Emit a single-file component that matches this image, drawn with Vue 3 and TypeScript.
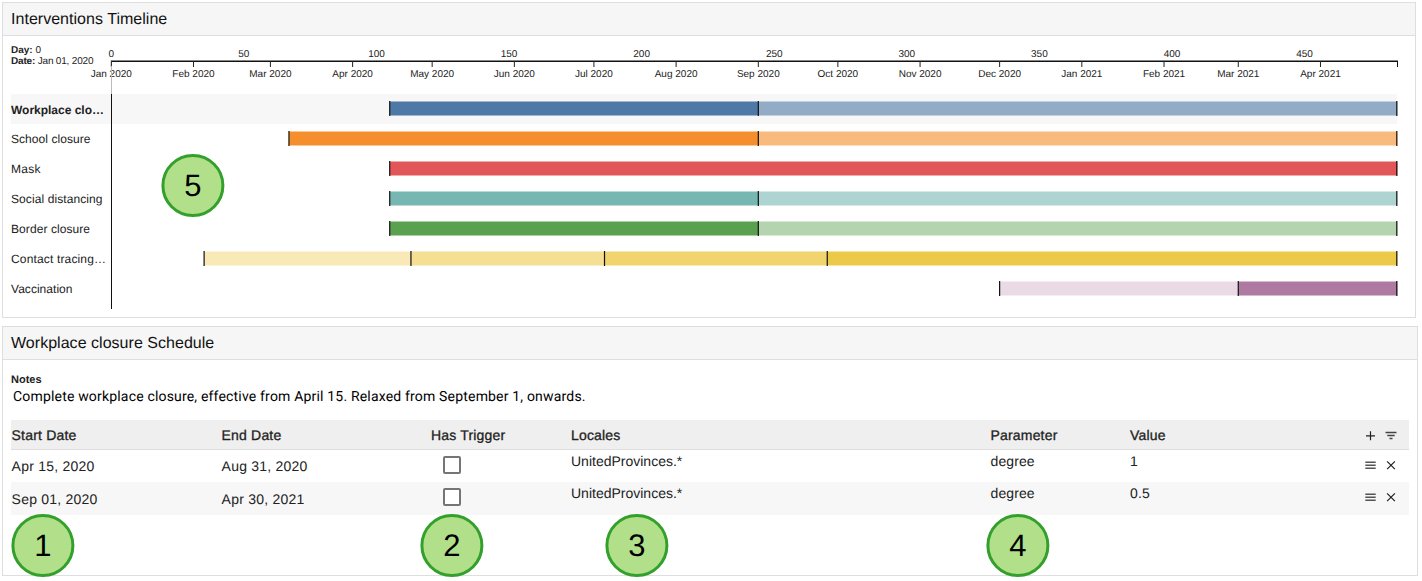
<script setup lang="ts">
interface Segment { from: number; to: number; opacity: number }
interface Row { label: string; width: number; color: string; active?: boolean; segments: Segment[] }
interface Entry { start: string; end: string; locale: string; parameter: string; value: string }

const LAST_DAY = 485
const x = (day: number): number => 111.3 + day * 2.6517

const dayTicks: number[] = [0, 50, 100, 150, 200, 250, 300, 350, 400, 450]
const monthTicks = [
  { day: 0, label: 'Jan 2020' }, { day: 31, label: 'Feb 2020' }, { day: 60, label: 'Mar 2020' },
  { day: 91, label: 'Apr 2020' }, { day: 121, label: 'May 2020' }, { day: 152, label: 'Jun 2020' },
  { day: 182, label: 'Jul 2020' }, { day: 213, label: 'Aug 2020' }, { day: 244, label: 'Sep 2020' },
  { day: 274, label: 'Oct 2020' }, { day: 305, label: 'Nov 2020' }, { day: 335, label: 'Dec 2020' },
  { day: 366, label: 'Jan 2021' }, { day: 397, label: 'Feb 2021' }, { day: 425, label: 'Mar 2021' },
  { day: 456, label: 'Apr 2021' },
]

const rows: Row[] = [
  { label: 'Workplace clo…', width: 93, color: '#4e79a7', active: true, segments: [{ from: 105, to: 244, opacity: 1 }, { from: 244, to: LAST_DAY, opacity: 0.6 }] },
  { label: 'School closure', width: 79.5, color: '#f58f2d', segments: [{ from: 67, to: 244, opacity: 1 }, { from: 244, to: LAST_DAY, opacity: 0.62 }] },
  { label: 'Mask', width: 29.5, color: '#e15759', segments: [{ from: 105, to: LAST_DAY, opacity: 1 }] },
  { label: 'Social distancing', width: 91.5, color: '#76b7b2', segments: [{ from: 105, to: 244, opacity: 1 }, { from: 244, to: LAST_DAY, opacity: 0.6 }] },
  { label: 'Border closure', width: 79, color: '#59a14f', segments: [{ from: 105, to: 244, opacity: 1 }, { from: 244, to: LAST_DAY, opacity: 0.46 }] },
  { label: 'Contact tracing…', width: 95, color: '#edc949', segments: [{ from: 35, to: 113, opacity: 0.4 }, { from: 113, to: 186, opacity: 0.6 }, { from: 186, to: 270, opacity: 0.8 }, { from: 270, to: LAST_DAY, opacity: 1 }] },
  { label: 'Vaccination', width: 61.5, color: '#af7aa1', segments: [{ from: 335, to: 425, opacity: 0.28 }, { from: 425, to: LAST_DAY, opacity: 1 }] },
]

const entries: Entry[] = [
  { start: 'Apr 15, 2020', end: 'Aug 31, 2020', locale: 'UnitedProvinces.*', parameter: 'degree', value: '1' },
  { start: 'Sep 01, 2020', end: 'Apr 30, 2021', locale: 'UnitedProvinces.*', parameter: 'degree', value: '0.5' },
]
</script>

<template>
  <main class="page">
    <section class="panel timeline">
      <h2>Interventions Timeline</h2>
      <svg class="chart" width="1412" height="281" viewBox="3 36 1412 281">
        <g class="cursor-info">
          <text x="11" y="53"><tspan class="strong">Day:</tspan> 0</text>
          <text x="11" y="64" textLength="82.5"><tspan class="strong">Date:</tspan> Jan 01, 2020</text>
        </g>
        <rect x="11" y="94" width="1386" height="30" fill="#f7f7f7" />
        <g class="axis">
          <rect x="111" y="60.5" width="1287" height="1.5" fill="#111" />
          <rect v-for="d in dayTicks" :key="'t' + d" :x="x(d) - 0.5" y="60" width="1" height="1" fill="#777" />
          <text v-for="d in dayTicks" :key="d" :x="x(d)" y="57">{{ d }}</text>
          <g v-for="m in monthTicks" :key="m.day">
            <rect :x="x(m.day) - 0.5" y="61" width="1" height="6" fill="#222" />
            <text :x="x(m.day)" y="77">{{ m.label }}</text>
          </g>
          <rect x="1397" y="61" width="1" height="6" fill="#111" />
        </g>
        <rect x="111" y="61" width="1" height="34" fill="#bbb" />
        <rect x="111" y="61" width="1" height="5" fill="#333" />
        <rect x="111" y="94" width="1" height="215" fill="#111" />
        <g v-for="(row, i) in rows" :key="row.label">
          <text class="row-label" :class="{ strong: row.active }" x="11" :y="(row.active ? 114 : 113) + i * 30" :textLength="row.width">{{ row.label }}</text>
          <rect
            v-for="s in row.segments" :key="s.from"
            :x="x(s.from)" :y="101.5 + i * 30" :width="x(s.to) - x(s.from)" height="14"
            :fill="row.color" :fill-opacity="s.opacity"
          />
          <rect
            v-for="s in row.segments" :key="'m' + s.from"
            :x="x(s.from) - 0.6" :y="101 + i * 30" width="1.2" height="15" fill="#111"
          />
          <rect :x="1396.2" :y="101 + i * 30" width="1.2" height="15" fill="#111" />
        </g>
      </svg>
      <span class="badge b5">5</span>
    </section>

    <section class="panel schedule">
      <h2>Workplace closure Schedule</h2>
      <div class="notes-label">Notes</div>
      <p class="notes">Complete workplace closure, effective from April 15. Relaxed from September 1, onwards.</p>
      <div class="table">
        <div class="row head">
          <span class="inset">Start Date</span><span class="inset">End Date</span><span>Has Trigger</span><span>Locales</span>
          <span>Parameter</span><span>Value</span>
          <svg class="icons" width="40" height="20" viewBox="0 0 40 20">
            <path d="M6 10.8H15M10.5 6.3V15.3" stroke="#222" stroke-width="1.2" />
            <path d="M25.5 7.5H36.5M27.3 10.5H34.7M29.5 13.5H32.5" stroke="#444" stroke-width="1.3" />
          </svg>
        </div>
        <div v-for="(e, i) in entries" :key="i" class="row entry">
          <span class="date inset">{{ e.start }}</span><span class="date inset">{{ e.end }}</span>
          <span class="check"><i class="box" /></span>
          <span class="locale">{{ e.locale }}</span><span>{{ e.parameter }}</span><span>{{ e.value }}</span>
          <svg class="icons" width="40" height="20" viewBox="0 0 40 20">
            <path d="M5.3 7.3H15.7M5.3 10.3H15.7M5.3 13.3H15.7" stroke="#555" stroke-width="1.4" />
            <path d="M27.1 6.4L34.9 14.2M34.9 6.4L27.1 14.2" stroke="#222" stroke-width="1.2" />
          </svg>
        </div>
      </div>
      <span class="badge b1">1</span>
      <span class="badge b2">2</span>
      <span class="badge b3">3</span>
      <span class="badge b4">4</span>
    </section>
  </main>
</template>

<style>
body { background: #fff; }
</style>

<style scoped>
.page {
  box-sizing: border-box;
  width: 1422px;
  height: 581px;
  padding: 2px;
  overflow: hidden;
  font-family: "Liberation Sans", Arial, sans-serif;
  color: #222;
  text-rendering: geometricPrecision;
}
.panel {
  position: relative;
  box-sizing: border-box;
  border: 1px solid #dedede;
}
.timeline { width: 1414px; height: 316px; }
.schedule { width: 1416px; height: 250px; margin-top: 8px; }
h2 {
  box-sizing: border-box;
  height: 33px;
  margin: 0;
  padding-left: 8px;
  border-bottom: 1px solid #dedede;
  background: #f6f6f6;
  color: #111;
  font-size: 16px;
  font-weight: 400;
  line-height: 34px;
  letter-spacing: 0.03px;
}
.chart { display: block; }
.chart text { font-size: 10px; fill: #222; }
.axis text { text-anchor: middle; }
.chart .row-label { font-size: 12px; }
.chart .strong { font-weight: 700; }
.notes-label {
  margin: 14px 0 0 8px;
  font-size: 11px;
  font-weight: 700;
  line-height: 13px;
}
.notes {
  margin: 0 0 0 10px;
  color: #000;
  font: 14px/20px Roboto, sans-serif;
  letter-spacing: 0.18px;
}
.table {
  width: 1398px;
  margin: 13px 0 0 8px;
  font-size: 14px;
  letter-spacing: 0.1px;
}
.row {
  display: grid;
  grid-template-columns: 210px 210px 140px 419.5px 139.5px 229.5px 40px;
  box-sizing: border-box;
}
.head {
  height: 30px;
  border-bottom: 1px solid #dedede;
  background: #efefef;
  line-height: 30px;
  letter-spacing: 0.18px;
  -webkit-text-stroke: 0.3px #222;
}
.inset { padding-left: 0.6px; }
.entry { height: 32px; line-height: 23px; }
.entry:last-child { height: 33px; background: #f7f7f7; }
.date { padding-top: 5px; letter-spacing: 0.22px; }
.entry:last-child .date { padding-top: 6px; }
.locale { letter-spacing: 0; }
.icons { margin-top: 5px; fill: none; -webkit-text-stroke: 0; }
.check { padding: 6px 0 0 11.5px; }
.box {
  display: block;
  box-sizing: border-box;
  width: 18px;
  height: 18px;
  border: 2px solid #757575;
  border-radius: 2px;
  background: #fff;
}
.badge {
  position: absolute;
  box-sizing: border-box;
  width: 63px;
  height: 63px;
  border: 3px solid #33a02c;
  border-radius: 50%;
  background: #b2df8a;
  color: #000;
  font-size: 31px;
  line-height: 57px;
  text-align: center;
  transform: translateX(0.4px);
}
.b5 { left: 158px; top: 151px; }
.b1 { left: 8px; top: 187px; }
.b2 { left: 417px; top: 187px; }
.b3 { left: 602px; top: 187px; }
.b4 { left: 983px; top: 187px; }
</style>
